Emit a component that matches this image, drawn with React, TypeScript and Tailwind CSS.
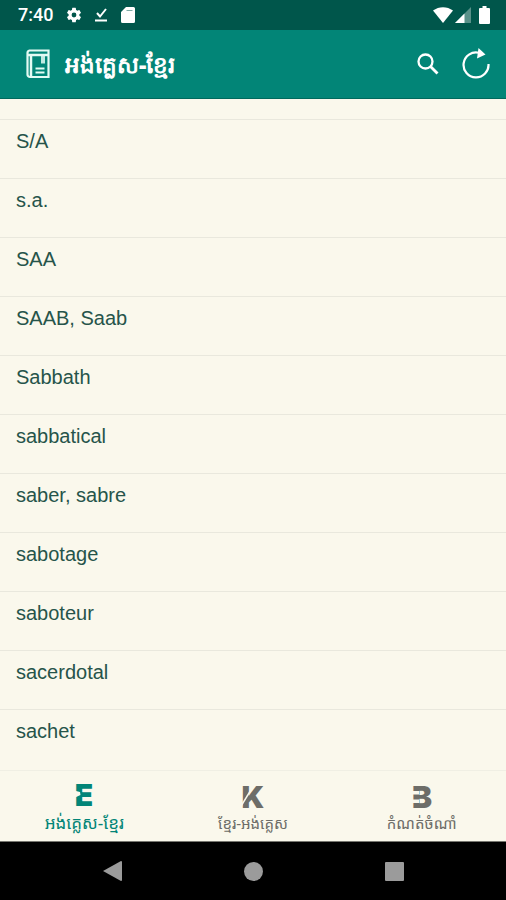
import React from 'react';

const WORDS = [
  'S/A',
  's.a.',
  'SAA',
  'SAAB, Saab',
  'Sabbath',
  'sabbatical',
  'saber, sabre',
  'sabotage',
  'saboteur',
  'sacerdotal',
  'sachet',
];

// `cut` is the notch drawn over each letter in the bar colour
const TABS = [
  { letter: 'E', label: 'អង់គ្លេស-ខ្មែរ', cut: 'M4 13.500L10 15L10.500 18L4 21z', active: true },
  { letter: 'K', label: 'ខ្មែរ-អង់គ្លេស', cut: 'M3 24L14 6h1.800L3 27z', active: false },
  { letter: 'B', label: 'កំណត់ចំណាំ', cut: 'M3 12h8v3.500H3zM3 20.500h8v3.500H3z', active: false },
];

function StatusBar() {
  return (
    <div className="flex h-[30px] shrink-0 items-center justify-between bg-[#00564b] pl-[18px] pr-4 text-white">
      <div className="flex items-center">
        <span className="w-[34px] font-['Roboto','Noto_Sans',sans-serif] text-lg font-medium leading-5">7:40</span>
        <svg className="ml-[13px] h-[18px] w-[18px]" viewBox="0 0 24 24" fill="currentColor">
          <path d="M19.14 12.94c.04-.3.06-.61.06-.94s-.02-.64-.07-.94l2.03-1.58a.5.5 0 0 0 .12-.61l-1.92-3.32a.5.5 0 0 0-.59-.22l-2.39.96a7 7 0 0 0-1.62-.94l-.36-2.54a.5.5 0 0 0-.48-.41h-3.84a.5.5 0 0 0-.47.41l-.36 2.54c-.59.24-1.13.57-1.62.94l-2.39-.96a.5.5 0 0 0-.59.22L2.74 8.87a.5.5 0 0 0 .12.61l2.03 1.58c-.05.3-.09.63-.09.94s.02.64.07.94l-2.03 1.58a.5.5 0 0 0-.12.61l1.92 3.32c.12.22.37.29.59.22l2.39-.96c.5.38 1.03.7 1.62.94l.36 2.54c.05.24.24.41.48.41h3.84c.24 0 .44-.17.47-.41l.36-2.54a7 7 0 0 0 1.62-.94l2.39.96c.22.08.47 0 .59-.22l1.92-3.32a.5.5 0 0 0-.12-.61zM12 15.2a3.2 3.2 0 1 1 0-6.4 3.2 3.2 0 0 1 0 6.4z" />
        </svg>
        <svg className="ml-2.5 h-4 w-4" viewBox="0 0 16 16" fill="none" stroke="currentColor" strokeWidth="2">
          <path d="M4 6l3 3.500L13 2M2 13.500h12" />
        </svg>
        <svg className="ml-3 h-4 w-[14px]" viewBox="0 0 14 16" fill="currentColor">
          <path fillRule="evenodd" d="M5 0h7.500A1.500 1.500 0 0 1 14 1.500v13a1.500 1.500 0 0 1-1.500 1.500h-11A1.500 1.500 0 0 1 0 14.500V5z" />
          <path d="M5.500 3.500h6" stroke="#00564b" strokeOpacity="0.5" />
        </svg>
      </div>
      <div className="flex items-center">
        <svg className="h-4 w-5" viewBox="0 0 20 16" fill="currentColor">
          <path d="M0 3.500C6-1 14-1 20 3.500L10 16z" />
        </svg>
        <svg className="ml-0.5 h-4 w-4" viewBox="0 0 16 16" fill="currentColor">
          <path d="M16 0v16H0z" opacity="0.35" />
          <path d="M9.500 6.500V16H0z" />
        </svg>
        <svg className="ml-2 h-[18px] w-[11px]" viewBox="0 0 11 18" fill="currentColor">
          <path d="M3.500 0h4v2H10a1 1 0 0 1 1 1v14a1 1 0 0 1-1 1H1a1 1 0 0 1-1-1V3a1 1 0 0 1 1-1h2.500z" />
        </svg>
      </div>
    </div>
  );
}

function Header() {
  return (
    <header className="flex h-[69px] shrink-0 items-center justify-between border-b border-[#00695d] bg-[#028577] pl-[26px] pr-4 text-white">
      <div className="flex items-center">
        <svg className="h-[30px] w-[25px]" viewBox="0 0 25 30" fill="none" stroke="#e3fbf4" strokeWidth="2.200">
          <path d="M3.500 1.500H22.500V28H4A2.500 2.500 0 0 1 1.500 25.500V4A2.500 2.500 0 0 1 3.500 1.500z" />
          <path d="M2 6h20.500M5 6v22" strokeWidth="2.500" />
          <path d="M17 6v8.500" strokeWidth="4" strokeOpacity="0.85" />
          <path d="M9.500 19.500h9M9.500 23.500h9" strokeWidth="1.800" />
        </svg>
        <h1 className="ml-[14px] whitespace-nowrap font-['Khmer_OS_Muol','Noto_Sans',sans-serif] text-[23px] font-black leading-8">
          អង់គ្លេស-ខ្មែរ
        </h1>
      </div>
      <div className="flex items-center gap-[22px]">
        <button type="button" aria-label="Search">
          <svg className="h-6 w-6" viewBox="0 0 24 24" fill="none" stroke="currentColor" strokeWidth="2.300">
            <circle cx="9.500" cy="9.500" r="7" />
            <path d="M14.500 14.500l7 7" strokeWidth="2.800" />
          </svg>
        </button>
        <button type="button" aria-label="Refresh">
          <svg className="h-8 w-7" viewBox="0 0 28 32" fill="none" stroke="currentColor" strokeWidth="2.200">
            <path d="M17 4.800A12.500 12.500 0 1 0 26.500 16" />
            <path d="M16.500 0L23.500 6.500L15 10.500z" fill="currentColor" stroke="none" />
          </svg>
        </button>
      </div>
    </header>
  );
}

function TabBar() {
  return (
    <nav className="grid h-[71px] shrink-0 grid-cols-3 border-t border-[#f0efe4] bg-[#faf8ec]">
      {TABS.map((tab) => (
        <button
          key={tab.letter}
          type="button"
          className={`flex flex-col items-center ${tab.active ? 'pt-1.5 text-[#028577]' : 'pt-2 text-[#6d6d68]'}`}
        >
          <svg className="h-9 w-7 shrink-0 overflow-visible" viewBox="0 0 28 36">
            <text x="14" y="29" textAnchor="middle" fill="currentColor" className="font-['Inter','Roboto',sans-serif] text-[30px] font-black">
              {tab.letter}
            </text>
            <path d={tab.cut} fill="#faf8ec" />
          </svg>
          <span
            className={`whitespace-nowrap font-['Noto_Sans_Khmer','Noto_Sans',sans-serif] ${tab.active ? 'text-[17px] leading-5' : 'text-[15px] leading-4'}`}
          >
            {tab.label}
          </span>
        </button>
      ))}
    </nav>
  );
}

function SystemNav() {
  return (
    <div className="flex h-[59px] shrink-0 items-center justify-center gap-[122px] border-t border-[#777770] bg-black text-[#9b9b9b]">
      <button type="button" aria-label="Back">
        <svg className="h-5 w-[19px]" viewBox="0 0 19 20" fill="currentColor">
          <path d="M18 0a1 1 0 0 1 1 1v18a1 1 0 0 1-1 1L0 10z" />
        </svg>
      </button>
      <button type="button" aria-label="Home">
        <svg className="h-[19px] w-[19px]" viewBox="0 0 18 18" fill="currentColor">
          <circle cx="9" cy="9" r="9" />
        </svg>
      </button>
      <button type="button" aria-label="Recent apps">
        <svg className="h-[19px] w-[19px]" viewBox="0 0 19 19" fill="currentColor">
          <rect width="19" height="19" rx="1" />
        </svg>
      </button>
    </div>
  );
}

export default function App() {
  return (
    <div className="flex h-screen w-full flex-col overflow-hidden bg-[#faf8ec]">
      <StatusBar />
      <Header />
      <main className="min-h-0 flex-1 overflow-hidden">
        {/* Tail of the row scrolled under the header */}
        <div className="h-[21px] border-b border-[#e9e8dd]" />
        <ul>
          {WORDS.map((word) => (
            <li key={word} className="h-[59px] border-b border-[#e9e8dd] last:border-b-0">
              <a
                href="#"
                className="block h-full px-4 pt-[7px] font-['Liberation_Sans',Arial,sans-serif] text-xl leading-7 text-[#26544a]"
              >
                {word}
              </a>
            </li>
          ))}
        </ul>
      </main>
      <TabBar />
      <SystemNav />
    </div>
  );
}
